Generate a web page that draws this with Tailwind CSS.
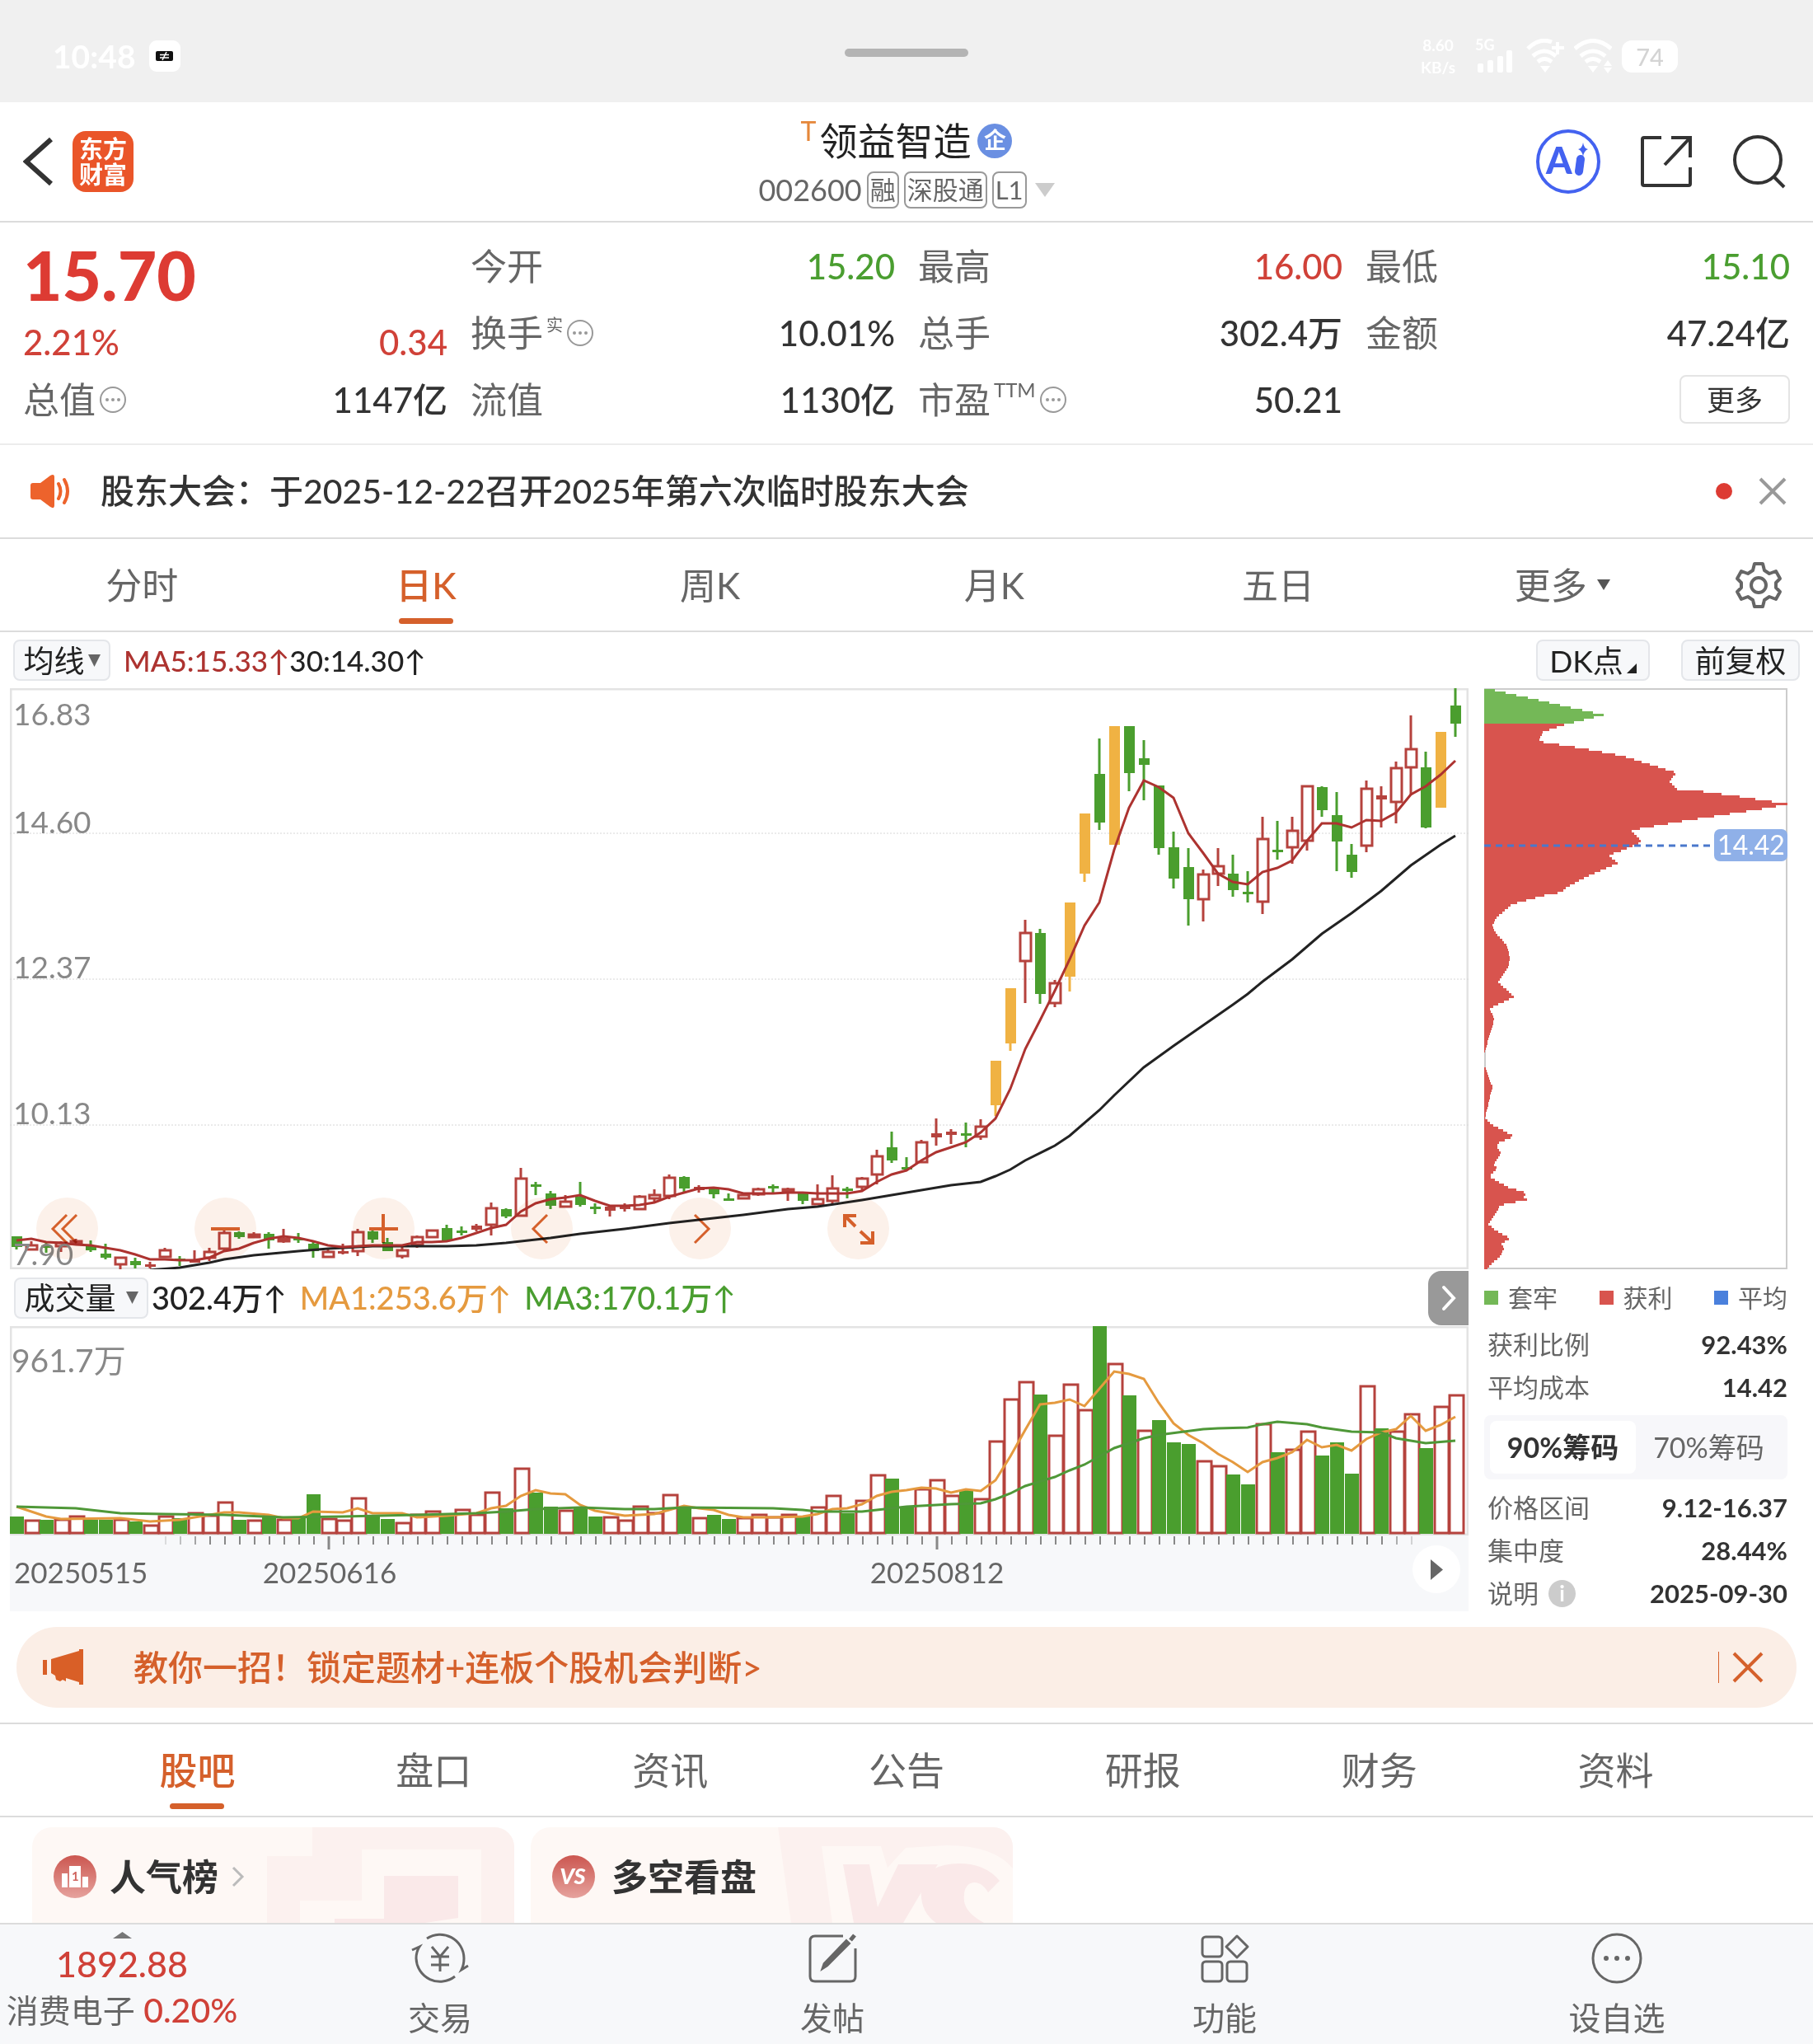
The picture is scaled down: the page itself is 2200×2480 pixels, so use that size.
<!DOCTYPE html>
<html lang="zh-CN">
<head>
    <meta charset="UTF-8">
    <meta name="viewport" content="width=device-width, initial-scale=1.0">
    <title>领益智造 002600</title>
    <script src="https://cdn.jsdelivr.net/npm/@tailwindcss/browser@4"></script>
</head>
<body class="bg-white text-[#333] font-['Lato','Noto_Sans_CJK_SC',sans-serif]">

<!-- Status bar -->
<div class="bg-[#f0f0f0] h-[124px] grid grid-cols-[1fr_auto_1fr] text-white">
    <div class="flex items-center gap-4 pl-16 pt-3">
        <span class="text-[39px] leading-none font-bold">10:48</span>
        <svg class="w-[38px] h-[38px]" viewBox="0 0 38 38">
            <rect width="38" height="38" rx="9" fill="#fff"/>
            <rect x="8" y="13" width="21" height="12" rx="2" fill="#111"/>
            <path d="M13 17.5h11M13 21h11M21 14l-5 10" stroke="#fff" stroke-width="1.5"/>
        </svg>
    </div>
    <div class="mt-[59px] w-[150px] h-[10px] rounded-full bg-[#b4b4b4]"></div>
    <div class="flex items-center justify-end gap-4 pr-[164px] pt-3">
        <div class="text-[19px] leading-[27px] font-bold text-center">8.60<br>KB/s</div>
        <svg class="w-[46px] h-[50px] ml-2" viewBox="0 -4 46 50" fill="#fff">
            <text x="0" y="14" font-size="18" font-weight="700">5G</text>
            <rect x="3" y="30" width="7" height="11" rx="2"/>
            <rect x="15" y="26" width="7" height="15" rx="2"/>
            <rect x="27" y="21" width="7" height="20" rx="2"/>
            <rect x="38" y="14" width="7" height="27" rx="2"/>
        </svg>
        <svg class="w-[46px] h-[42px]" viewBox="0 0 46 42" fill="none" stroke="#fff" stroke-width="5">
            <path d="M2 12Q16-2 31 4M8 21Q22 9 36 21M14 28Q22 21 31 28"/>
            <path d="M38 4v15M31 11h15" stroke-width="4"/>
            <path d="M17 33h12l-6 8z" fill="#fff" stroke="none"/>
        </svg>
        <svg class="w-[46px] h-[42px] -ml-1" viewBox="0 0 46 42" fill="none" stroke="#fff" stroke-width="5">
            <path d="M1 12Q23-7 45 12M8 21Q23 9 38 21M14 28Q23 21 32 28"/>
            <path d="M17 33h12l-6 8zM36 33l5-7 5 7zM36 35l5 7 5-7z" fill="#fff" stroke="none"/>
        </svg>
        <div class="w-[68px] h-[39px] -ml-1 rounded-xl bg-white text-[#d4d4d4] text-[29px] leading-[39px] text-center font-medium">74</div>
    </div>
</div>

<!-- Header -->
<header class="h-[146px] border-b-2 border-[#dcdcdc] grid grid-cols-[1fr_auto_1fr] items-center">
    <div class="flex items-center gap-6 pl-7">
        <button aria-label="返回">
            <svg class="w-[36px] h-[60px]" viewBox="0 0 36 60" fill="none" stroke="#333" stroke-width="6">
                <path d="M34 3L4 30l30 27"/>
            </svg>
        </button>
        <div class="w-[74px] h-[74px] rounded-2xl bg-[#ea5529] text-white text-[29px] leading-[31px] font-bold text-center pt-[6px]">东方<br>财富</div>
    </div>
    <div class="flex flex-col items-center gap-2 pt-1">
        <h1 class="flex items-center gap-2 text-[46px] leading-[56px] text-[#222]">
            <span class="flex items-start gap-1"><span class="text-[32px] leading-8 text-[#e5873a]">T</span>领益智造</span>
            <span class="w-[42px] h-[42px] rounded-full bg-[#6a8fe2] text-white text-[27px] leading-[40px] font-bold text-center">企</span>
        </h1>
        <div class="flex items-center gap-[6px] text-[#666]">
            <span class="text-[36px] leading-[46px]">002600</span>
            <span class="h-[45px] px-[2px] border-2 border-[#999] rounded-lg text-[31px] leading-[40px]">融</span>
            <span class="h-[45px] px-[2px] border-2 border-[#999] rounded-lg text-[31px] leading-[40px]">深股通</span>
            <span class="h-[45px] px-[2px] border-2 border-[#999] rounded-lg text-[31px] leading-[40px]">L1</span>
            <svg class="w-[24px] h-[17px] ml-1" viewBox="0 0 24 17"><path d="M0 0h24L12 17z" fill="#ccc"/></svg>
        </div>
    </div>
    <div class="flex items-center justify-end gap-12 pr-8">
        <button aria-label="AI">
            <svg class="w-[78px] h-[78px]" viewBox="0 0 78 78">
                <circle cx="39" cy="39" r="37" fill="none" stroke="#4362f0" stroke-width="4"/>
                <text x="12" y="54" font-size="45" font-weight="900" fill="#4362f0">A</text>
                <path d="M54 36l-2 15" stroke="#4362f0" stroke-width="10" stroke-linecap="round"/>
                <path d="M57 16q1 7 6 8-5 2-6 9-1-7-6-9 5-1 6-8z" fill="#4362f0"/>
            </svg>
        </button>
        <button aria-label="分享">
            <svg class="w-[64px] h-[64px]" viewBox="0 0 64 64" fill="none" stroke="#333" stroke-width="4">
                <path d="M26 3H5a2 2 0 0 0-2 2v54a2 2 0 0 0 2 2h54a2 2 0 0 0 2-2V39M38 3h23v24M61 3L30 36"/>
            </svg>
        </button>
        <button aria-label="搜索">
            <svg class="w-[66px] h-[66px]" viewBox="0 0 66 66" fill="none" stroke="#333" stroke-width="4">
                <circle cx="31" cy="31" r="28"/><path d="M50 51l13 13"/>
            </svg>
        </button>
    </div>
</header>

<!-- Quote -->
<section class="border-b-2 border-[#ececec] pt-3 pb-[13px] px-7 grid grid-cols-4 gap-x-7 text-[44px] leading-[54px] text-[#666]">
    <div class="flex flex-col">
        <div class="h-[102px] flex items-center text-[82px] font-black text-[#dd3b33]">15.70</div>
        <div class="h-[61px] flex items-center justify-between text-[42px] text-[#d04138] font-medium"><span>2.21%</span><span>0.34</span></div>
        <div class="h-[80px] flex items-center justify-between">
            <span class="flex items-center gap-1">总值
                <svg class="w-[34px] h-[34px]" viewBox="0 0 34 34" fill="#999"><circle cx="17" cy="17" r="15" fill="none" stroke="#999" stroke-width="2"/><circle cx="10" cy="17" r="2"/><circle cx="17" cy="17" r="2"/><circle cx="24" cy="17" r="2"/></svg>
            </span>
            <span class="text-[42px] text-[#333] font-medium">1147亿</span>
        </div>
    </div>
    <div>
        <div class="h-[81px] flex items-center justify-between"><span>今开</span><span class="text-[42px] text-[#4a9e30] font-medium">15.20</span></div>
        <div class="h-[81px] flex items-center justify-between">
            <span class="flex items-center gap-1">换手<sup class="text-[20px]">实</sup>
                <svg class="w-[34px] h-[34px]" viewBox="0 0 34 34" fill="#999"><circle cx="17" cy="17" r="15" fill="none" stroke="#999" stroke-width="2"/><circle cx="10" cy="17" r="2"/><circle cx="17" cy="17" r="2"/><circle cx="24" cy="17" r="2"/></svg>
            </span>
            <span class="text-[42px] text-[#333] font-medium">10.01%</span>
        </div>
        <div class="h-[81px] flex items-center justify-between"><span>流值</span><span class="text-[42px] text-[#333] font-medium">1130亿</span></div>
    </div>
    <div>
        <div class="h-[81px] flex items-center justify-between"><span>最高</span><span class="text-[42px] text-[#d04138] font-medium">16.00</span></div>
        <div class="h-[81px] flex items-center justify-between"><span>总手</span><span class="text-[42px] text-[#333] font-medium">302.4万</span></div>
        <div class="h-[81px] flex items-center justify-between">
            <span class="flex items-center gap-1">市盈<sup class="text-[24px]">TTM</sup>
                <svg class="w-[34px] h-[34px]" viewBox="0 0 34 34" fill="#999"><circle cx="17" cy="17" r="15" fill="none" stroke="#999" stroke-width="2"/><circle cx="10" cy="17" r="2"/><circle cx="17" cy="17" r="2"/><circle cx="24" cy="17" r="2"/></svg>
            </span>
            <span class="text-[42px] text-[#333] font-medium">50.21</span>
        </div>
    </div>
    <div>
        <div class="h-[81px] flex items-center justify-between"><span>最低</span><span class="text-[42px] text-[#4a9e30] font-medium">15.10</span></div>
        <div class="h-[81px] flex items-center justify-between"><span>金额</span><span class="text-[42px] text-[#333] font-medium">47.24亿</span></div>
        <div class="h-[81px] flex items-center justify-end">
            <button class="w-[134px] h-[59px] border-2 border-[#e4e4e4] rounded-lg text-[34px] leading-none text-[#333]">更多</button>
        </div>
    </div>
</section>

<!-- Notice -->
<section class="h-[114px] border-b-2 border-[#dcdcdc] flex items-center pl-9 pr-8">
    <svg class="w-[50px] h-[42px]" viewBox="0 0 50 42" fill="#ed632c">
        <path d="M4 11h9L25 2q5-3 5 2v34q0 5-5 2L13 31H4q-3 0-3-3V14q0-3 3-3z"/>
        <path d="M35 12q5 9 0 18M42 7q8 14 0 28" fill="none" stroke="#ed632c" stroke-width="4" stroke-linecap="round"/>
    </svg>
    <a href="#" class="ml-9 text-[41px] font-medium">股东大会：于2025-12-22召开2025年第六次临时股东大会</a>
    <span class="ml-auto w-5 h-5 rounded-full bg-[#dd3b33]"></span>
    <button class="ml-8" aria-label="关闭">
        <svg class="w-[34px] h-[34px]" viewBox="0 0 34 34" stroke="#999" stroke-width="4"><path d="M2 2l30 30M32 2L2 32"/></svg>
    </button>
</section>

<!-- Period tabs -->
<nav class="h-[113px] border-b-2 border-[#dcdcdc] flex text-[44px] text-[#666]">
    <button class="flex-1">分时</button>
    <button class="flex-1 relative text-[#d5602b] font-medium">日K<span class="absolute left-1/2 -translate-x-1/2 bottom-2 w-[66px] h-[7px] rounded-full bg-[#d5602b]"></span></button>
    <button class="flex-1">周K</button>
    <button class="flex-1">月K</button>
    <button class="flex-1">五日</button>
    <button class="flex-1 flex items-center justify-center gap-3">更多
        <svg class="w-[16px] h-[13px]" viewBox="0 0 16 13"><path d="M0 0h16L8 13z" fill="#555"/></svg>
    </button>
    <button class="w-[132px] flex items-center justify-center" aria-label="设置">
        <svg class="w-[58px] h-[58px]" viewBox="0 0 58 58" fill="none" stroke="#666" stroke-width="4" stroke-linejoin="round">
            <path d="M24 3h10l2 8 6 4 8-3 5 9-5 5v6l5 5-5 9-8-3-6 4-2 8H24l-2-8-6-4-8 3-5-9 5-5v-6l-5-5 5-9 8 3 6-4z"/>
            <circle cx="29" cy="29" r="9"/>
        </svg>
    </button>
</nav>

<!-- Indicator toolbar -->
<div class="h-[68px] flex items-center pl-4 pr-4 text-[37px] text-[#222]">
    <button class="w-[118px] h-[50px] border-2 border-[#e4e6ea] rounded-lg bg-[#f7f8fa] flex items-center justify-center gap-1 leading-none">均线
        <svg class="w-[15px] h-[15px]" viewBox="0 0 15 15"><path d="M0 0h15L7.500 15z" fill="#666"/></svg>
    </button>
    <span class="ml-4 text-[35px] font-medium text-[#ad3330]">MA5:15.33↑</span>
    <span class="text-[35px] font-medium">30:14.30↑</span>
    <button class="ml-auto w-[138px] h-[50px] border-2 border-[#e4e6ea] rounded-lg bg-[#f7f8fa] flex items-center justify-center gap-1 leading-none">DK点
        <svg class="w-[12px] h-[12px] mt-5" viewBox="0 0 12 12"><path d="M12 0v12H0z" fill="#222"/></svg>
    </button>
    <button class="ml-[38px] w-[144px] h-[50px] border-2 border-[#e4e6ea] rounded-lg bg-[#f7f8fa] leading-none">前复权</button>
</div>

<!-- Charts -->
<main class="flex gap-[19px] pl-3 pr-[31px]">
    <div class="flex-1 min-w-0">
        <div class="relative">
            <svg id="kline" class="block w-full" viewBox="12 835 1770 705"></svg>
            <div class="absolute left-8 bottom-3 flex gap-[117px] text-[#d5602b]">
                <button class="w-[75px] h-[75px] rounded-full bg-[#fcf1ea] mix-blend-multiply" aria-label="最左">
                    <svg viewBox="0 0 75 75" fill="none" stroke="currentColor" stroke-width="3"><path d="M37 21L20 38l17 17M49 21L32 38l17 17"/></svg>
                </button>
                <button class="w-[75px] h-[75px] rounded-full bg-[#fcf1ea] mix-blend-multiply" aria-label="缩小">
                    <svg viewBox="0 0 75 75" fill="none" stroke="currentColor" stroke-width="4"><path d="M20 38h35"/></svg>
                </button>
                <button class="w-[75px] h-[75px] rounded-full bg-[#fcf1ea] mix-blend-multiply" aria-label="放大">
                    <svg viewBox="0 0 75 75" fill="none" stroke="currentColor" stroke-width="4"><path d="M20 38h35M37 20v35"/></svg>
                </button>
                <button class="w-[75px] h-[75px] rounded-full bg-[#fcf1ea] mix-blend-multiply" aria-label="左移">
                    <svg viewBox="0 0 75 75" fill="none" stroke="currentColor" stroke-width="3"><path d="M44 21L27 38l17 17"/></svg>
                </button>
                <button class="w-[75px] h-[75px] rounded-full bg-[#fcf1ea] mix-blend-multiply" aria-label="右移">
                    <svg viewBox="0 0 75 75" fill="none" stroke="currentColor" stroke-width="3"><path d="M31 21l17 17-17 17"/></svg>
                </button>
                <button class="w-[75px] h-[75px] rounded-full bg-[#fcf1ea] mix-blend-multiply" aria-label="全屏">
                    <svg viewBox="0 0 75 75" fill="none" stroke="currentColor" stroke-width="4"><path d="M21 36V22h14M22 23l12 12M55 41v14H40M54 54L40 41"/></svg>
                </button>
            </div>
        </div>

        <div class="h-[69px] flex items-center pl-[5px] text-[38px] text-[#222] font-medium">
            <button class="w-[163px] h-[50px] border-2 border-[#e4e6ea] rounded-lg bg-[#f7f8fa] flex items-center justify-center gap-3 text-[37px] leading-none font-normal">成交量
                <svg class="w-[15px] h-[15px]" viewBox="0 0 15 15"><path d="M0 0h15L7.500 15z" fill="#666"/></svg>
            </button>
            <span class="ml-1">302.4万↑</span>
            <span class="ml-4 text-[#e59a3f]">MA1:253.6万↑</span>
            <span class="ml-4 text-[#4a9e30]">MA3:170.1万↑</span>
            <button class="ml-auto w-[49px] h-[66px] rounded-l-2xl bg-[#999] flex items-center justify-center" aria-label="展开">
                <svg class="w-[18px] h-[32px]" viewBox="0 0 18 32" fill="none" stroke="#fff" stroke-width="4" stroke-linecap="round"><path d="M3 3l12 13L3 29"/></svg>
            </button>
        </div>

        <div class="relative">
            <svg id="volume" class="block w-full" viewBox="12 1609 1770 346"></svg>
            <button class="absolute right-[10px] bottom-[22px] w-[58px] h-[58px] rounded-full bg-white flex items-center justify-center" aria-label="播放">
                <svg class="w-[15px] h-[25px]" viewBox="0 0 15 25"><path d="M0 0l15 12.500L0 25z" fill="#666"/></svg>
            </button>
        </div>
    </div>

    <!-- Chip distribution -->
    <aside class="w-[368px] text-[31px] text-[#666]">
        <svg id="chips" class="block w-full" viewBox="1801 835 368 705"></svg>
        <div class="h-[65px] pt-1 flex items-center justify-between text-[30px]">
            <span class="flex items-center gap-3"><i class="w-[17px] h-[17px] bg-[#74b857]"></i>套牢</span>
            <span class="flex items-center gap-3"><i class="w-[17px] h-[17px] bg-[#d8544e]"></i>获利</span>
            <span class="flex items-center gap-3"><i class="w-[17px] h-[17px] bg-[#4a80dc]"></i>平均</span>
        </div>
        <div class="pl-1 flex justify-between leading-[52px]"><span>获利比例</span><b class="text-[#333]">92.43%</b></div>
        <div class="pl-1 flex justify-between leading-[52px]"><span>平均成本</span><b class="text-[#333]">14.42</b></div>
        <div class="my-2 h-[78px] p-[7px] rounded-lg bg-[#f7f7fa] flex text-[34px]">
            <button class="flex-1 rounded-lg bg-white font-bold text-[#333] leading-none">90%筹码</button>
            <button class="flex-1 leading-none">70%筹码</button>
        </div>
        <div class="pl-1 flex justify-between leading-[52px]"><span>价格区间</span><b class="text-[#333]">9.12-16.37</b></div>
        <div class="pl-1 flex justify-between leading-[52px]"><span>集中度</span><b class="text-[#333]">28.44%</b></div>
        <div class="pl-1 flex justify-between leading-[52px]">
            <span class="flex items-center gap-3">说明
                <i class="w-[33px] h-[33px] rounded-full bg-[#ccc] text-white text-[26px] leading-[32px] text-center not-italic font-bold">i</i>
            </span>
            <b class="text-[#333]">2025-09-30</b>
        </div>
    </aside>
</main>

<!-- Promo banner -->
<div class="mx-5 mt-[15px] h-[98px] rounded-full bg-[#fbeee6] flex items-center pl-8 pr-10 text-[#d5602b]">
    <svg class="w-[50px] h-[44px]" viewBox="0 0 50 44" fill="#d95f27">
        <path d="M0 13h5v18H0zM10 12L44 2V0h5v43h-5v-3l-16-5v4l-4-2-3 2-5-2-1-5-5-3z"/>
    </svg>
    <a href="#" class="ml-[60px] text-[42px] font-medium">教你一招！锁定题材+连板个股机会判断&gt;</a>
    <span class="ml-auto w-px h-[38px] bg-[#d5602b]"></span>
    <button class="ml-4" aria-label="关闭">
        <svg class="w-[38px] h-[38px]" viewBox="0 0 38 38" stroke="#d5602b" stroke-width="4"><path d="M2 2l34 34M36 2L2 36"/></svg>
    </button>
</div>

<!-- Section tabs -->
<nav class="mt-[18px] h-[115px] border-y-2 border-[#dcdcdc] px-24 flex text-[46px] text-[#666]">
    <button class="flex-1 relative text-[#d5602b] font-medium">股吧<span class="absolute left-1/2 -translate-x-1/2 bottom-2 w-[66px] h-[7px] rounded-full bg-[#d5602b]"></span></button>
    <button class="flex-1">盘口</button>
    <button class="flex-1">资讯</button>
    <button class="flex-1">公告</button>
    <button class="flex-1">研报</button>
    <button class="flex-1">财务</button>
    <button class="flex-1">资料</button>
</nav>

<!-- Cards, cut off by the bottom bar -->
<section class="pt-3 pl-[39px] flex gap-5">
    <a href="#" class="relative w-[585px] h-[116px] rounded-t-3xl overflow-hidden bg-[#fef8f5] flex items-center pl-[26px] pt-1">
        <svg class="absolute right-0 top-0 h-full" viewBox="0 0 300 116">
            <path d="M55 0h245v116h-40V27H115v62H40v27H0V35h55z" fill="#fcf1ef"/>
            <path d="M142 59h90v51l-40 6H82v-5h60z" fill="#fae9e9"/>
        </svg>
        <svg class="relative w-[52px] h-[52px]" viewBox="0 0 52 52">
            <defs><linearGradient id="badge" x2="0" y2="1"><stop stop-color="#cc5750"/><stop offset="1" stop-color="#e6a29d"/></linearGradient></defs>
            <circle cx="26" cy="26" r="26" fill="url(#badge)"/>
            <path d="M10 22h7v17h-7zM19 13h14v26H19zM35 26h7v13h-7z" fill="#fff"/>
            <text x="22" y="31" font-size="15" font-weight="700" fill="#cf655f">1</text>
        </svg>
        <span class="relative ml-4 text-[44px] font-bold">人气榜</span>
        <svg class="relative ml-4 w-[16px] h-[26px]" viewBox="0 0 16 26" fill="none" stroke="#bbb" stroke-width="3"><path d="M2 2l11 11L2 24"/></svg>
    </a>
    <a href="#" class="relative w-[585px] h-[116px] rounded-t-3xl overflow-hidden bg-[#fef8f5] flex items-center pl-[26px] pt-1">
        <!-- Decorative V and S shapes -->
        <svg class="absolute right-0 top-0 h-full" viewBox="0 0 285 116">
            <path d="M0 0h285v50Q262 22 205 22l-50 3-22 24-8-26H53l13 93H16z" fill="#fcf1ef"/>
            <path d="M79 45h32l10 52 25-52h48l-42 71H92z" fill="#fae9e9"/>
            <path d="M269 65Q252 44 220 44q-42 0-46 32-2 26 18 40h58q-22-12-24-26-2-22 12-23 10 0 17 12z" fill="#fae9e9"/>
        </svg>
        <svg class="relative w-[52px] h-[52px]" viewBox="0 0 52 52">
            <circle cx="26" cy="26" r="26" fill="url(#badge)"/>
            <text x="25" y="35" font-size="27" font-weight="900" font-style="italic" fill="#fff" text-anchor="middle">VS</text>
        </svg>
        <span class="relative ml-5 text-[44px] font-bold">多空看盘</span>
    </a>
</section>

<!-- Bottom bar -->
<footer class="h-[148px] bg-[#f7f8fa] border-t-2 border-[#dcdcdc] flex text-[39px] leading-[50px] text-[#666]">
    <a href="#" class="w-[296px] flex flex-col items-center pt-[9px] font-medium text-[#d04138]">
        <svg class="w-[23px] h-[8px]" viewBox="0 0 23 8"><path d="M0 8L11.500 0 23 8z" fill="#777"/></svg>
        <span class="text-[43px] leading-[62px]">1892.88</span>
        <span class="whitespace-nowrap text-[41px]"><span class="text-[39px] text-[#666] font-normal">消费电子</span> 0.20%</span>
    </a>
    <a href="#" class="flex-1 flex flex-col items-center gap-4 pt-[10px]">
        <svg class="w-[70px] h-[62px]" viewBox="0 0 70 62" fill="none" stroke="#666" stroke-width="3">
            <path d="M19 7A29 29 0 0 1 64 31q0 8-3 14l8-5M53 53A29 29 0 0 1 6 31q0-8 4-14l-9 4"/>
            <path d="M25 17l10 12 10-12M24 29h22M24 39h22M35 29v18"/>
        </svg>交易
    </a>
    <a href="#" class="flex-1 flex flex-col items-center gap-4 pt-[10px]">
        <svg class="w-[62px] h-[62px]" viewBox="0 0 62 62" fill="none" stroke="#666" stroke-width="3">
            <path d="M44 4H10q-6 0-6 6v43q0 6 6 6h43q6 0 6-6V19"/>
            <path d="M22 38l-1 3 3-2L50 13l-2-2zM53 9l5-6" stroke-width="5"/>
        </svg>发帖
    </a>
    <a href="#" class="flex-1 flex flex-col items-center gap-4 pt-[10px]">
        <svg class="w-[62px] h-[62px]" viewBox="0 0 62 62" fill="none" stroke="#666" stroke-width="3" stroke-linejoin="round">
            <rect x="4" y="5" width="24" height="24" rx="4"/>
            <rect x="4" y="35" width="24" height="24" rx="4"/>
            <rect x="34" y="35" width="24" height="24" rx="4"/>
            <path d="M46 4l13 13-13 13-13-13z"/>
        </svg>功能
    </a>
    <a href="#" class="flex-1 flex flex-col items-center gap-4 pt-[10px]">
        <svg class="w-[62px] h-[62px]" viewBox="0 0 62 62" fill="#666">
            <circle cx="31" cy="31" r="29" fill="none" stroke="#666" stroke-width="3"/>
            <circle cx="18" cy="31" r="3"/><circle cx="31" cy="31" r="3"/><circle cx="44" cy="31" r="3"/>
        </svg>设自选
    </a>
</footer>

<script>
const RED = '#b5423d', GREEN = '#4a9e2e', YELLOW = '#f0b243';

// type, high, body top, body bottom, low (r: hollow, R: solid red, g: green, y: limit up)
const candles = `g 1500 1500 1513 1516|r 1506 1511 1516 1517|g 1508 1511 1513 1520|r 1506 1508 1512 1519|r 1503 1506 1508 1511|g 1505 1511 1517 1519|g 1509 1521 1526 1528|r 1525 1526 1534 1541|g 1526 1530 1535 1539|R 1531 1534 1537 1539
r 1514 1517 1525 1526|g 1524 1527 1529 1536|R 1517 1528 1532 1532|r 1514 1519 1526 1530|r 1493 1496 1515 1519|g 1494 1495 1501 1503|r 1495 1498 1501 1502|g 1495 1497 1505 1515|r 1491 1503 1506 1508|g 1496 1502 1505 1508
g 1507 1509 1518 1526|r 1515 1519 1525 1526|R 1509 1518 1520 1522|r 1491 1495 1518 1524|g 1493 1494 1504 1508|g 1502 1507 1518 1518|r 1512 1517 1524 1527|r 1499 1501 1510 1514|r 1492 1493 1501 1502|g 1486 1490 1506 1506
g 1488 1493 1495 1499|R 1485 1487 1492 1494|r 1459 1466 1486 1499|g 1466 1467 1476 1478|r 1417 1430 1475 1476|g 1434 1437 1439 1450|g 1445 1448 1463 1467|r 1450 1458 1464 1465|g 1434 1452 1462 1464|g 1460 1464 1467 1473
R 1463 1464 1469 1476|R 1460 1464 1467 1470|r 1450 1452 1467 1468|r 1443 1450 1454 1460|r 1425 1429 1451 1455|g 1427 1428 1442 1446|R 1438 1440 1444 1447|g 1441 1442 1449 1454|g 1448 1454 1456 1457|r 1447 1450 1454 1455
r 1441 1443 1449 1451|g 1437 1439 1441 1447|r 1441 1443 1446 1457|g 1447 1448 1457 1461|r 1437 1455 1461 1462|r 1426 1442 1457 1462|g 1440 1442 1444 1454|r 1428 1430 1440 1445|r 1395 1403 1425 1437|g 1373 1392 1408 1411
g 1404 1416 1418 1420|r 1383 1386 1410 1411|R 1357 1375 1380 1390|R 1370 1373 1377 1388|g 1362 1375 1377 1392|r 1358 1367 1379 1383|y 1287 1287 1341 1354|y 1199 1199 1266 1275|r 1116 1132 1166 1217|g 1127 1132 1206 1218
r 1189 1193 1217 1222|y 1095 1095 1185 1203|y 987 987 1060 1070|g 896 939 998 1007|y 881 881 1025 1025|g 881 881 938 960|g 898 920 928 971|g 953 953 1029 1037|g 1009 1028 1066 1078|g 1029 1052 1091 1123
r 1055 1061 1091 1118|r 1029 1051 1060 1075|g 1037 1060 1080 1088|g 1057 1082 1084 1095|r 991 1018 1094 1109|g 996 1031 1033 1043|r 991 1008 1028 1048|r 953 954 1020 1032|g 954 955 983 991|g 961 989 1021 1057
g 1024 1037 1058 1065|r 947 957 1026 1034|R 954 965 970 1004|r 924 932 973 999|r 868 909 931 965|g 912 931 1004 1005|y 888 888 980 980|g 835 856 878 894`.split(/[|\n]/).map(c => c.trim().split(' '));

const ma5 = [1505,1503,1507,1508,1510,1511,1514,1517,1522,1528,1528,1529,1529,1526,1518,1515,1508,1503,1500,1502,1506,1511,1513,1512,1511,1511,1511,1507,1507,1506,1502,1496,1490,1486,1470,1460,1455,1453,1450,1457,1463,1463,1462,1459,1452,1447,1442,1441,1443,1448,1448,1448,1447,1447,1448,1448,1448,1445,1434,1425,1420,1408,1398,1392,1386,1374,1357,1321,1273,1238,1202,1164,1123,1095,1031,980,947,955,968,1011,1035,1060,1070,1073,1058,1053,1044,1020,999,999,1004,995,996,986,964,954,940,923];
// index, y
const ma30 = [[9,1541],[11,1538],[13,1532],[14,1528],[16,1523],[19,1518],[21,1515],[24,1512],[29,1512],[31,1511],[33,1508],[36,1502],[38,1497],[41,1491],[44,1484],[47,1478],[49,1474],[52,1467],[54,1464],[57,1456],[60,1447],[63,1438],[65,1434],[66,1427],[67,1419],[68,1408],[70,1390],[71,1378],[73,1347],[74,1329],[76,1295],[78,1269],[80,1244],[82,1219],[83,1206],[84,1191],[86,1164],[88,1133],[90,1108],[92,1081],[94,1050],[96,1025],[97,1014]];

const volumes = 'g1840 r1845 g1844 r1844 r1840 g1844 g1844 r1844 g1846 r1851 r1840 g1842 r1836 r1839 r1823 g1844 r1845 g1839 r1844 g1842 g1813 r1843 r1845 r1818 g1839 g1843 r1848 r1838 r1834 g1838 r1832 r1838 r1811 g1830 r1782 g1811 g1828 r1833 g1829 g1840 r1841 r1845 r1828 r1836 r1814 g1828 r1842 g1838 g1843 r1842 r1838 r1841 r1838 g1839 r1829 r1815 g1836 r1821 r1790 g1794 g1828 r1807 r1796 r1815 g1808 r1819 r1749 r1698 r1677 g1692 r1742 r1680 r1711 g1609 r1655 g1693 r1736 g1723 g1750 g1752 r1773 r1779 g1789 g1801 r1728 g1762 r1759 r1737 g1766 g1750 g1788 r1682 g1733 r1737 r1716 g1757 r1707 r1693'.split(' ');
const volMa1 = [[0,1828],[2,1840],[3,1843],[7,1842],[9,1846],[11,1844],[12,1841],[14,1835],[15,1835],[17,1838],[18,1842],[19,1842],[20,1834],[22,1835],[23,1830],[24,1836],[26,1836],[27,1841],[29,1839],[31,1836],[32,1830],[33,1827],[34,1815],[35,1808],[36,1812],[37,1813],[38,1826],[39,1833],[41,1839],[43,1837],[45,1827],[46,1830],[47,1832],[48,1838],[49,1841],[51,1841],[53,1840],[54,1837],[55,1831],[56,1830],[57,1825],[58,1815],[59,1810],[60,1808],[61,1805],[62,1806],[63,1811],[64,1807],[65,1809],[66,1796],[67,1767],[68,1735],[69,1704],[70,1702],[71,1698],[72,1706],[73,1685],[74,1664],[75,1667],[76,1673],[77,1702],[78,1727],[79,1741],[80,1751],[81,1764],[82,1774],[83,1786],[84,1774],[85,1769],[86,1762],[87,1747],[88,1756],[89,1753],[90,1760],[91,1746],[92,1738],[93,1734],[94,1718],[95,1736],[96,1729],[97,1719]];
const volMa3 = [[0,1828],[4,1830],[7,1836],[10,1837],[14,1838],[18,1841],[22,1840],[27,1838],[31,1836],[33,1834],[35,1831],[38,1829],[41,1831],[43,1831],[45,1829],[51,1830],[53,1832],[54,1834],[57,1834],[60,1828],[63,1825],[65,1824],[66,1819],[67,1812],[68,1803],[70,1792],[71,1784],[72,1777],[73,1767],[74,1757],[76,1745],[77,1741],[80,1734],[81,1733],[83,1732],[84,1728],[85,1725],[87,1728],[88,1732],[90,1737],[92,1738],[93,1745],[95,1751],[97,1748]];

// y, width
const chips = [[836,13],[866,145],[879,93],[887,71],[898,66],[907,122],[916,169],[936,233],[947,225],[956,234],[959,266],[965,310],[974,368],[979,344],[994,246],[1006,178],[1015,187],[1020,191],[1030,169],[1036,151],[1046,162],[1060,129],[1075,100],[1081,94],[1085,73],[1096,33],[1112,15],[1121,10],[1128,12],[1145,27],[1159,31],[1171,30],[1190,17],[1208,36],[1222,7],[1236,12],[1277,0],[1291,0],[1317,10],[1355,1],[1363,9],[1377,36],[1385,18],[1390,15],[1398,21],[1411,11],[1416,16],[1426,6],[1439,29],[1443,42],[1447,53],[1450,44],[1453,57],[1461,19],[1467,16],[1484,5],[1490,12],[1501,31],[1508,21],[1513,24],[1523,19],[1534,7],[1540,2]];

const x = i => 20 + i * 18;
const line = (pts, color, w = 3) => `<polyline points="${pts.map(p => x(p[0]) + ',' + p[1]).join(' ')}" fill="none" stroke="${color}" stroke-width="${w}"/>`;
const label = (px, py, text, color, size, anchor = 'start') => `<text x="${px}" y="${py}" font-size="${size}" fill="${color}" text-anchor="${anchor}">${text}</text>`;

function drawKline() {
    let s = '<rect x="13" y="836" width="1768" height="703" fill="none" stroke="#e3e3e3" stroke-width="3"/>';
    [1011, 1188, 1365].forEach(y => s += `<path d="M12 ${y}H1782" stroke="#d6d6d6" stroke-width="1" stroke-dasharray="2 2"/>`);
    candles.forEach(([type, hi, top, bot, lo], i) => {
        const cx = x(i), color = type === 'g' ? GREEN : type === 'y' ? YELLOW : RED;
        const h = Math.max(bot - top, 3);
        s += `<path d="M${cx} ${hi}V${top}M${cx} ${bot}V${lo}" stroke="${color}" stroke-width="3"/>`;
        s += type === 'r'
            ? `<rect x="${cx - 6}" y="${top}" width="13" height="${h}" fill="none" stroke="${color}" stroke-width="3"/>`
            : `<rect x="${cx - 6}" y="${top}" width="13" height="${h}" fill="${color}"/>`;
    });
    s += line(ma30, '#222') + line(ma5.map((y, i) => [i, y]), '#ad3330');
    [['16.83', 880], ['14.60', 1011], ['12.37', 1187], ['10.13', 1364], ['7.90', 1535]].forEach(([t, y]) => s += label(16, y, t, '#888', 37));
    document.getElementById('kline').innerHTML = s;
}

function drawVolume() {
    let s = '<rect x="13" y="1610" width="1768" height="252" fill="none" stroke="#e3e3e3" stroke-width="3"/>';
    s += '<rect x="12" y="1863" width="1770" height="92" fill="#f7f8fa"/>';
    volumes.forEach((v, i) => {
        const top = +v.slice(1), cx = x(i);
        s += v[0] === 'g'
            ? `<rect x="${cx - 8}" y="${top}" width="17" height="${1861 - top}" fill="${GREEN}"/>`
            : `<rect x="${cx - 7}" y="${top}" width="17" height="${1860 - top}" fill="#fff" stroke="${RED}" stroke-width="3"/>`;
    });
    s += line(volMa1, '#e59a3f') + line(volMa3, '#4f9838');
    for (let i = 10; i < 95; i++) {
        const major = i === 21 || i === 62;
        // ticks fade out towards both ends
        const fade = Math.min(1, (i - 9) / 4, (95 - i) / 3);
        s += `<path d="M${x(i) + 1} 1864v${major ? 16 : 10}" stroke="#888" stroke-opacity="${fade}" stroke-width="${major ? 3 : 2}"/>`;
    }
    s += label(14, 1665, '961.7万', '#888', 39);
    s += label(17, 1921, '20250515', '#666', 35) + label(400, 1921, '20250616', '#666', 35, 'middle') + label(1137, 1921, '20250812', '#666', 35, 'middle');
    document.getElementById('volume').innerHTML = s;
}

function drawChips() {
    let s = '<rect x="1802" y="836" width="366" height="703" fill="none" stroke="#ccc" stroke-width="2"/>';
    let k = 0;
    for (let y = 836; y < 1540; y += 3) {
        while (k < chips.length - 2 && chips[k + 1][0] <= y) k++;
        const [y0, w0] = chips[k], [y1, w1] = chips[k + 1];
        const w = Math.round(w0 + (w1 - w0) * (y - y0) / (y1 - y0));
        s += `<rect x="1801" y="${y}" width="${Math.max(w, 0)}" height="3" fill="${y < 877 ? '#74b857' : '#d8544e'}"/>`;
    }
    s += '<path d="M1801 1026H2080" stroke="#4a78cc" stroke-width="3" stroke-dasharray="8 6"/>';
    s += '<rect x="2080" y="1006" width="89" height="39" rx="7" fill="#8fb0e8"/>' + label(2125, 1037, '14.42', '#fff', 32, 'middle');
    document.getElementById('chips').innerHTML = s;
}

drawKline();
drawVolume();
drawChips();
</script>
</body>
</html>
